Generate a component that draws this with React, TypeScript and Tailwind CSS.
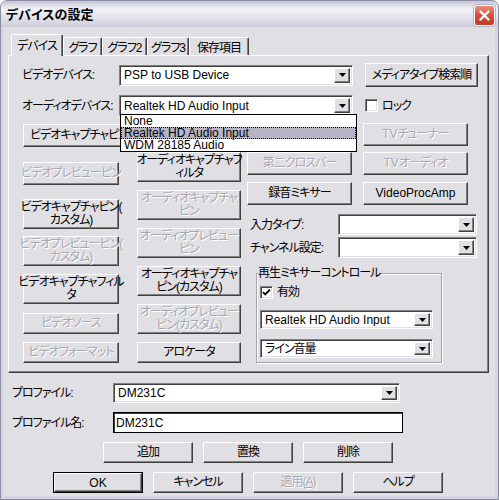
import type { ReactNode } from 'react';

const FONT = "font-['Liberation_Sans','Noto_Sans_CJK_JP',sans-serif] [font-feature-settings:'palt']";

// latin runs keep normal spacing, kana runs are squeezed to the dialog font width
function L({ children }: { children: ReactNode }) {
  return <span className="tracking-normal">{children}</span>;
}

function Btn({
  className = '',
  disabled,
  children,
}: {
  className?: string;
  disabled?: boolean;
  children: ReactNode;
}) {
  return (
    <div
      className={`flex shrink-0 items-center justify-center whitespace-nowrap text-center leading-[13px] bg-[#e0dfe3] border border-t-white border-l-white border-r-[#404040] border-b-[#404040] shadow-[inset_-1px_-1px_0_#808080] ${
        disabled ? 'text-[#a9a8b2] [text-shadow:1px_1px_0_#fff]' : 'text-black'
      } ${className}`}
    >
      {children}
    </div>
  );
}

// default push button gets an extra black frame
function DefaultBtn({ className = '', children }: { className?: string; children: ReactNode }) {
  return (
    <div className={`flex shrink-0 border border-black ${className}`}>
      <div className="flex flex-1 items-center justify-center bg-[#e0dfe3] border border-t-white border-l-white border-r-[#404040] border-b-[#404040] shadow-[inset_-1px_-1px_0_#808080]">
        {children}
      </div>
    </div>
  );
}

function DropArrow() {
  return (
    <div className="flex w-[16px] shrink-0 items-center justify-center bg-[#e0dfe3] border border-t-white border-l-white border-r-[#404040] border-b-[#404040] shadow-[inset_-1px_-1px_0_#808080]">
      <svg width="7" height="4" viewBox="0 0 7 4">
        <path d="M0 0h7L3.5 4z" fill="#000" />
      </svg>
    </div>
  );
}

function Combo({
  className = '',
  text,
  children,
}: {
  className?: string;
  text?: ReactNode;
  children?: ReactNode;
}) {
  return (
    <div
      className={`relative flex shrink-0 bg-white p-[2px] border border-t-[#808080] border-l-[#808080] border-b-white border-r-white shadow-[inset_1px_1px_0_#404040,inset_-1px_-1px_0_#e0dfe3] ${className}`}
    >
      <div className="flex flex-1 items-center overflow-hidden whitespace-nowrap pl-[2px]">{text}</div>
      <DropArrow />
      {children}
    </div>
  );
}

function CheckBox({ checked }: { checked?: boolean }) {
  return (
    <div className="flex h-[13px] w-[13px] shrink-0 items-center justify-center bg-white border border-t-[#808080] border-l-[#808080] border-b-white border-r-white shadow-[inset_1px_1px_0_#404040,inset_-1px_-1px_0_#e0dfe3]">
      {checked && (
        <svg width="9" height="9" viewBox="0 0 9 9">
          <path d="M1 4.2l2.2 2.3L8 1.6" fill="none" stroke="#000" strokeWidth="1.8" />
        </svg>
      )}
    </div>
  );
}

const audioDevices = ['None', 'Realtek HD Audio Input', 'WDM 28185 Audio'];

export default function App() {
  return (
    <div className={`${FONT} text-[12px] tracking-[-1px] text-black`}>
      <div className="flex h-[500px] w-[499px] flex-col overflow-hidden rounded-t-[7px] border border-[#8b8ba3] bg-[#d6d5e0]">
        {/* caption */}
        <div className="flex h-[26px] shrink-0 items-center justify-between bg-[linear-gradient(180deg,#c6c6d8_0%,#f3f3f7_32%,#e3e3eb_62%,#cdcddb_100%)] pl-[5px] pr-[3px]">
          <span className="text-[13px] font-bold leading-none tracking-normal">デバイスの設定</span>
          <div className="mt-[2px] flex h-[21px] w-[21px] items-center justify-center rounded-[3px] border border-white bg-[linear-gradient(180deg,#ea8f7e_0%,#d8533f_45%,#c23a28_100%)] shadow-[0_0_0_1px_#b6b6c8]">
            <svg width="11" height="11" viewBox="0 0 11 11">
              <path d="M1.5 1.5l8 8M9.5 1.5l-8 8" stroke="#fff" strokeWidth="2.2" strokeLinecap="round" />
            </svg>
          </div>
        </div>

        {/* client area */}
        <div className="mx-[3px] mb-[3px] flex flex-1 flex-col bg-[#e0dfe3]">
          {/* tabs */}
          <div className="mt-[7px] flex h-[21px] items-end pl-[7px]">
            <div className="relative z-10 -mb-[1px] flex h-[22px] w-[52px] items-start justify-center rounded-t-[2px] border border-b-0 border-t-white border-l-white border-r-[#404040] bg-[#e0dfe3] pt-[2px] shadow-[inset_-1px_0_0_#808080]">
              デバイス
            </div>
            {['グラフ', 'グラフ2', 'グラフ3', '保存項目'].map((t, i) => (
              <div
                key={t}
                className={`flex h-[18px] items-start justify-center rounded-t-[2px] border border-b-0 border-t-white border-l-white border-r-[#404040] pt-[1px] shadow-[inset_-1px_0_0_#808080] ${
                  ['w-[39px]', 'w-[45px]', 'w-[42px]', 'w-[60px]'][i]
                }`}
              >
                {t}
              </div>
            ))}
          </div>

          {/* tab page */}
          <div className="ml-[4px] flex h-[318px] w-[481px] flex-col border border-t-white border-l-white border-r-[#404040] border-b-[#404040] pl-[13px] shadow-[inset_-1px_-1px_0_#808080]">
            <div className="mt-[7px] flex h-[24px] items-center">
              <span className="w-[97px] whitespace-nowrap">ビデオデバイス:</span>
              <Combo className="h-[21px] w-[234px]" text={<L>PSP to USB Device</L>} />
              <Btn className="ml-[12px] h-[24px] w-[113px]">メディアタイプ検索順</Btn>
            </div>

            <div className="relative z-20 mt-[8px] flex h-[21px] items-center">
              <span className="w-[97px] whitespace-nowrap">オーディオデバイス:</span>
              <Combo className="h-[21px] w-[234px]" text={<L>Realtek HD Audio Input</L>}>
                {/* open list */}
                <div className="absolute left-0 top-[18px] flex w-[237px] flex-col border border-black bg-white tracking-normal">
                  {audioDevices.map((d, i) => (
                    <div
                      key={d}
                      className={`h-[12px] whitespace-nowrap pl-[2px] leading-[11px] border ${
                        i === 1 ? 'border-dotted border-black bg-[#b6b5c6]' : 'border-transparent'
                      }`}
                    >
                      {d}
                    </div>
                  ))}
                </div>
              </Combo>
              <div className="ml-[12px] flex items-center gap-[4px]">
                <CheckBox />
                <span>ロック</span>
              </div>
            </div>

            <div className="mt-[7px] flex items-start">
              {/* video column */}
              <div className="ml-[1px] flex w-[96px] flex-col">
                <Btn className="mt-[1px] h-[23px] w-[112px]">ビデオキャプチャピン</Btn>
                <Btn disabled className="mt-[15px] h-[23px] w-[96px]">ビデオプレビューピン</Btn>
                <Btn className="mt-[14px] h-[30px] w-[96px]">
                  ビデオキャプチャピン(<br />カスタム)
                </Btn>
                <Btn disabled className="mt-[7px] h-[30px] w-[96px]">
                  ビデオプレビューピン(<br />カスタム)
                </Btn>
                <Btn className="mt-[8px] h-[30px] w-[96px]">
                  ビデオキャプチャフィル<br />タ
                </Btn>
                <Btn disabled className="mt-[9px] h-[21px] w-[96px]">ビデオソース</Btn>
                <Btn disabled className="mt-[8px] h-[21px] w-[96px]">ビデオフォーマット</Btn>
              </div>

              {/* audio column */}
              <div className="ml-[18px] flex w-[104px] flex-col">
                <Btn className="mt-[29px] h-[30px] w-[104px]">
                  オーディオキャプチャフ<br />ィルタ
                </Btn>
                <Btn disabled className="mt-[8px] h-[30px] w-[104px]">
                  オーディオキャプチャ<br />ピン
                </Btn>
                <Btn disabled className="mt-[8px] h-[30px] w-[104px]">
                  オーディオプレビュー<br />ピン
                </Btn>
                <Btn className="mt-[8px] h-[30px] w-[104px]">
                  オーディオキャプチャ<br />ピン(カスタム)
                </Btn>
                <Btn disabled className="mt-[8px] h-[30px] w-[104px]">
                  オーディオプレビュー<br />ピン(カスタム)
                </Btn>
                <Btn className="mt-[8px] h-[21px] w-[104px]">アロケータ</Btn>
              </div>

              {/* device / mixer column */}
              <div className="ml-[6px] flex w-[230px] flex-col">
                <div className="flex gap-[11px]">
                  <Btn className="h-[23px] w-[105px]">クロスバー</Btn>
                  <Btn disabled className="h-[23px] w-[105px]">
                    <L>TV</L>チューナー
                  </Btn>
                </div>
                <div className="mt-[6px] flex gap-[11px]">
                  <Btn disabled className="h-[23px] w-[105px]">第二クロスバー</Btn>
                  <Btn disabled className="h-[23px] w-[105px]">
                    <L>TV</L>オーディオ
                  </Btn>
                </div>
                <div className="mt-[7px] flex gap-[11px]">
                  <Btn className="h-[23px] w-[105px]">録音ミキサー</Btn>
                  <Btn className="h-[23px] w-[105px]">
                    <L>VideoProcAmp</L>
                  </Btn>
                </div>

                <div className="mt-[9px] flex h-[21px] items-center">
                  <span className="w-[91px] whitespace-nowrap pl-[3px]">入力タイプ:</span>
                  <Combo className="h-[21px] w-[139px]" />
                </div>
                <div className="mt-[2px] flex h-[21px] items-center">
                  <span className="w-[91px] whitespace-nowrap pl-[3px]">チャンネル設定:</span>
                  <Combo className="h-[21px] w-[139px]" />
                </div>

                <fieldset className="m-0 ml-[9px] mt-[9px] h-[96px] w-[186px] border border-[#a3a2ac] pb-0 pl-[3px] pr-0 pt-0 shadow-[inset_1px_1px_0_#fff,1px_1px_0_#fff]">
                  <legend className="-ml-[2px] bg-[#e0dfe3] px-0 leading-[13px]">再生ミキサーコントロール</legend>
                  <div className="mt-[3px] flex items-center gap-[4px]">
                    <CheckBox checked />
                    <span>有効</span>
                  </div>
                  <Combo className="mt-[9px] h-[19px] w-[173px]" text={<L>Realtek HD Audio Input</L>} />
                  <Combo className="mt-[10px] h-[19px] w-[173px]" text="ライン音量" />
                </fieldset>
              </div>
            </div>
          </div>

          {/* profile */}
          <div className="ml-[8px] mt-[10px] flex h-[20px] items-center">
            <span className="w-[101px] whitespace-nowrap">プロファイル:</span>
            <Combo className="h-[20px] w-[287px]" text={<L>DM231C</L>} />
          </div>
          <div className="ml-[8px] mt-[9px] flex h-[21px] items-center">
            <span className="w-[101px] whitespace-nowrap">プロファイル名:</span>
            <div className="flex h-[21px] w-[290px] items-center border border-black bg-white pl-[2px] tracking-normal shadow-[inset_1px_1px_0_#404040]">
              DM231C
            </div>
          </div>

          <div className="ml-[99px] mt-[9px] flex gap-[10px]">
            <Btn className="h-[21px] w-[90px]">追加</Btn>
            <Btn className="h-[21px] w-[90px]">置換</Btn>
            <Btn className="h-[21px] w-[90px]">削除</Btn>
          </div>
          <div className="ml-[49px] mt-[9px] flex gap-[10px]">
            <DefaultBtn className="h-[21px] w-[90px]">
              <L>OK</L>
            </DefaultBtn>
            <Btn className="h-[21px] w-[90px]">キャンセル</Btn>
            <Btn disabled className="h-[21px] w-[90px]">
              適用(<u>A</u>)
            </Btn>
            <Btn className="h-[21px] w-[90px]">ヘルプ</Btn>
          </div>
        </div>
      </div>
    </div>
  );
}
